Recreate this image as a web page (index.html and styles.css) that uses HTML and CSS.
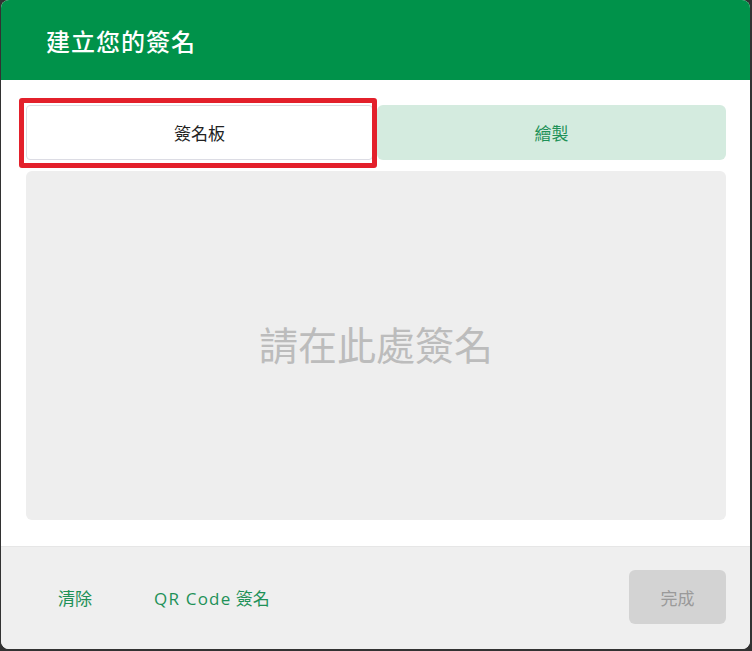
FILE: index.html
```html
<!DOCTYPE html>
<html lang="zh-Hant">
<head>
<meta charset="utf-8">
<title>建立您的簽名</title>
<link rel="stylesheet" href="styles.css">
</head>
<body>
<div class="modal">
  <div class="header">建立您的簽名</div>
  <div class="content">
    <div class="tabs">
      <div class="tab active">簽名板</div>
      <div class="tab">繪製</div>
      <div class="highlight"></div>
    </div>
    <div class="pad">請在此處簽名</div>
  </div>
  <div class="footer">
    <div class="left-actions">
      <span class="link">清除</span>
      <span class="link"><span class="latin">QR Code</span> 簽名</span>
    </div>
    <span class="done">完成</span>
  </div>
</div>
</body>
</html>
```
FILE: styles.css
```css
html, body {
  margin: 0;
  padding: 0;
  background: #323232;
}
body {
  width: 752px;
  height: 651px;
  overflow: hidden;
  font-family: "Open Sans", "Noto Sans CJK TC", sans-serif;
}
.modal {
  margin: 0 2px 0 1px;
  height: 649px;
  background: #fff;
  border-radius: 8px;
  overflow: hidden;
  display: flex;
  flex-direction: column;
}
.header {
  height: 80px;
  flex: none;
  background: #00924a;
  color: #fff;
  font-family: "Noto Sans CJK TC", sans-serif;
  font-size: 24px;
  font-weight: 500;
  letter-spacing: 1px;
  padding-left: 45px;
  display: flex;
  align-items: center;
}
.content {
  flex: 1;
  padding: 25px 24px 26px 25px;
  display: flex;
  flex-direction: column;
  gap: 11px;
}
.tabs {
  position: relative;
  display: flex;
  height: 55px;
  flex: none;
  gap: 4px;
}
.tab {
  flex: 1;
  display: flex;
  align-items: center;
  justify-content: center;
  border-radius: 6px;
  background: #d4ebdf;
  color: #1e9158;
  font-family: "Noto Sans CJK TC", sans-serif;
  font-size: 17px;
}
.tab.active {
  flex: none;
  width: 347px;
  box-sizing: border-box;
  background: #fff;
  color: #222;
  border: 1px solid #dcdce4;
  border-radius: 4px;
}
.highlight {
  position: absolute;
  left: -7px;
  top: -7px;
  width: 358px;
  height: 70px;
  box-sizing: border-box;
  border: 5px solid #e3202b;
  border-radius: 3px;
}
.pad {
  flex: 1;
  background: #eeeeee;
  border-radius: 6px;
  display: flex;
  align-items: center;
  justify-content: center;
  color: #bcbcbc;
  font-family: "Noto Sans CJK TC", sans-serif;
  font-size: 39px;
  padding-bottom: 6px;
}
.footer {
  height: 103px;
  flex: none;
  box-sizing: border-box;
  background: #efefef;
  border-top: 1px solid #e6e6e6;
  display: flex;
  align-items: center;
  justify-content: space-between;
  padding: 0 24px 2px 57px;
}
.left-actions {
  display: flex;
  gap: 62px;
}
.link {
  color: #1e9158;
  font-size: 17px;
}
.latin {
  letter-spacing: 1.2px;
}
.done {
  width: 97px;
  height: 54px;
  border-radius: 6px;
  background: #d3d3d3;
  color: #9a9a9a;
  font-family: "Noto Sans CJK TC", sans-serif;
  font-size: 17px;
  display: flex;
  align-items: center;
  justify-content: center;
}
```
